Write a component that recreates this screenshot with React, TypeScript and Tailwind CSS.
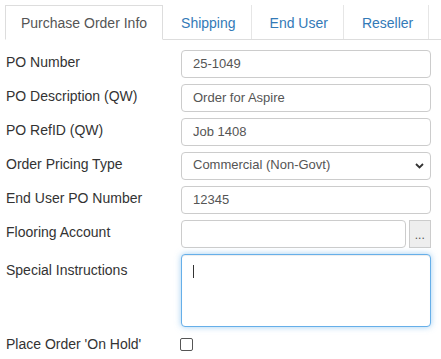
import { useState } from 'react';

const tabs = ['Purchase Order Info', 'Shipping', 'End User', 'Reseller'];

const inputCls =
  'box-border block h-[28px] w-full rounded-[4px] border border-[#ccc] bg-white pl-[11px] pr-2 pt-0 pb-[2px] text-[13px] leading-[16px] text-[#555] outline-none';

function Row({ label, children, labelPad = 'pt-[2px]', h = 'h-[28px]' }: { label: string; children: React.ReactNode; labelPad?: string; h?: string }) {
  return (
    <div className={`flex items-start ${h}`}>
      <label className={`w-[175px] shrink-0 text-[14px] leading-5 text-[#333] ${labelPad}`}>{label}</label>
      <div className="w-[250px]">{children}</div>
    </div>
  );
}

export default function App() {
  const [active] = useState(0);

  return (
    <div className="h-[359px] w-[441px] overflow-hidden bg-white font-['Liberation_Sans',Arial,sans-serif]">
      {/* Tabs */}
      <ul className="ml-[5px] flex border-b border-[#ddd] pt-[5px]">
        {tabs.map((t, i) =>
          i === active ? (
            <li
              key={t}
              className="-mb-px border border-[#ddd] border-b-transparent bg-white px-[15px] pt-[7px] pb-[6px] text-[14px] leading-5 text-[#555]"
            >
              {t}
            </li>
          ) : (
            <li
              key={t}
              className="ml-[2px] border-r border-[#e6e6e6] pl-[16px] pr-[15px] pt-[8px] pb-[6px] text-[14px] leading-5 text-[#337ab7]"
            >
              {t}
            </li>
          )
        )}
      </ul>

      {/* Form */}
      <div className="flex flex-col gap-[6px] pl-[6px] pt-[10px]">
        <Row label="PO Number">
          <input className={inputCls} defaultValue="25-1049" />
        </Row>
        <Row label="PO Description (QW)">
          <input className={inputCls} defaultValue="Order for Aspire" />
        </Row>
        <Row label="PO RefID (QW)">
          <input className={inputCls} defaultValue="Job 1408" />
        </Row>
        <Row label="Order Pricing Type">
          <div className="relative">
            <select className={`${inputCls} appearance-none`} defaultValue="commercial">
              <option value="commercial">Commercial (Non-Govt)</option>
            </select>
            <svg
              className="pointer-events-none absolute right-[7px] top-[11px]"
              width="9"
              height="6"
              viewBox="0 0 9 6"
              fill="none"
            >
              <path d="M1 1l3.5 3.5L8 1" stroke="#333" strokeWidth="1.8" />
            </svg>
          </div>
        </Row>
        <Row label="End User PO Number">
          <input className={inputCls} defaultValue="12345" />
        </Row>
        <Row label="Flooring Account">
          <div className="flex gap-[3px]">
            <input className={`${inputCls} w-[222px]`} />
            <button className="flex h-[28px] w-[25px] items-center justify-center border border-[#ccc] bg-[#eee] pt-px text-[12px] leading-none text-[#555]">
              ...
            </button>
          </div>
        </Row>
        <Row label="Special Instructions" labelPad="pt-[6px]" h="h-[73px]">
          <div className="relative">
            <textarea
              className="block h-[73px] w-full resize-none rounded-[4px] border border-[#66afe9] bg-white px-[11px] py-[6px] text-[13px] text-[#555] shadow-[inset_0_1px_1px_rgba(0,0,0,0.075),0_0_6px_rgba(102,175,233,0.6)] outline-none"
              readOnly
            />
            <span className="absolute left-[12px] top-[11px] h-[13px] w-px bg-[#333]" />
          </div>
        </Row>
        <div className="mt-px flex h-5 items-center">
          <label className="w-[174px] shrink-0 text-[14px] leading-5 text-[#333]">Place Order 'On Hold'</label>
          <input
            type="checkbox"
            className="h-[13px] w-[13px] appearance-none rounded-[2px] border border-[#555] bg-white"
          />
        </div>
      </div>
    </div>
  );
}
